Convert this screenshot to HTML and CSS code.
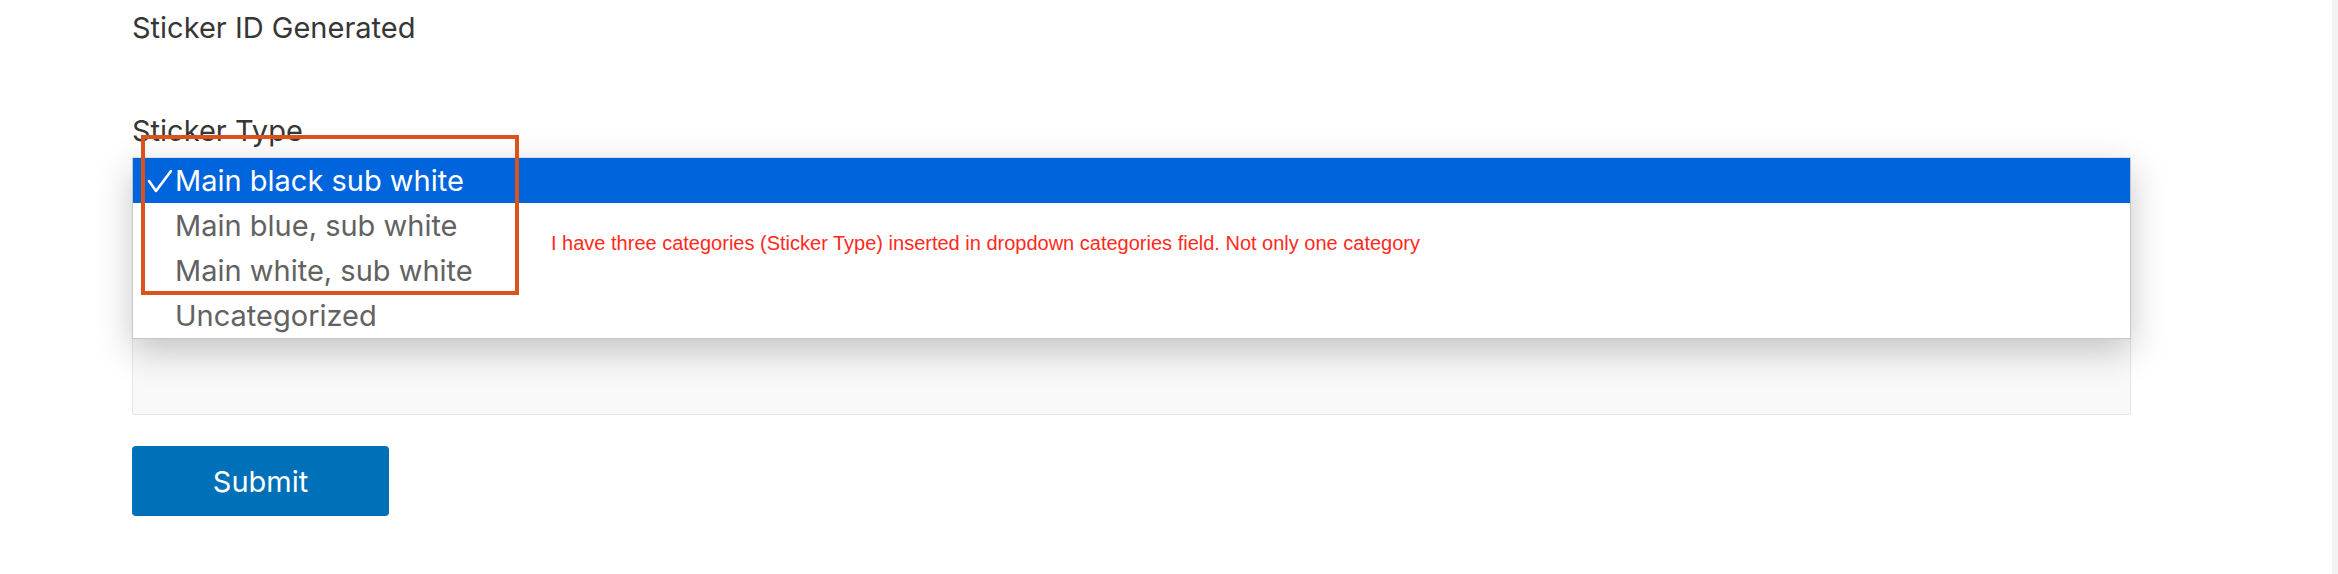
FILE: index.html
```html
<!DOCTYPE html>
<html lang="en">
<head>
    <meta charset="UTF-8">
    <title>Sticker form</title>
    <link rel="stylesheet" href="styles.css">
</head>
<body>
<div class="page">
    <form class="form">
        <!-- Generated id field -->
        <div class="field">
            <label class="label">Sticker ID Generated</label>
        </div>

        <!-- Sticker type select, shown opened -->
        <div class="field">
            <label class="label label-type">Sticker Type</label>
            <div class="select-wrap">
                <div class="select"></div>
                <div class="notes"></div>

                <ul class="menu">
                    <li class="option selected">
                        <svg class="check" width="26" height="24" viewBox="0 0 26 24">
                            <polyline points="2,12 9,22 24,2" fill="none" stroke="#ffffff" stroke-width="2.6" stroke-linecap="round" stroke-linejoin="round"/>
                        </svg>
                        Main black sub white
                    </li>
                    <li class="option">Main blue, sub white</li>
                    <li class="option">Main white, sub white</li>
                    <li class="option">Uncategorized</li>
                </ul>

                <!-- Annotation drawn over the screenshot -->
                <div class="mark"></div>
                <p class="note-text">I have three categories (Sticker Type) inserted in dropdown categories field. Not only one category</p>
            </div>
        </div>

        <button type="button" class="submit">Submit</button>
    </form>
    <div class="scroll-track"></div>
</div>
</body>
</html>
```

FILE: styles.css
```css
* {
    padding: 0;
    margin: 0;
    box-sizing: border-box;
}

body {
    background: #ffffff;
    font-family: "Inter", "Liberation Sans", sans-serif;
    color: #363636;
}

.page {
    display: flex;
    height: 574px;
}

.form {
    flex: 1;
    padding: 10px 0 0 132px;
}

.scroll-track {
    width: 6px;
    background-color: #f3f3f3;
}

.label {
    display: block;
    font-size: 29px;
    line-height: 36px;
    margin-bottom: 67px;
}

.label-type {
    margin-bottom: 8px;
}

.select-wrap {
    position: relative;
    width: 1999px;
}

.select {
    height: 86px;
    border: 1px solid #b9b9b9;
    border-radius: 3px;
    background-color: #ffffff;
}

.notes {
    height: 165px;
    margin-top: 7px;
    border: 1px solid #e6e6e6;
    border-radius: 3px;
    background-color: #f9f9f9;
}

.menu {
    position: absolute;
    top: 0;
    left: 0;
    width: 1999px;
    list-style: none;
    background-color: #ffffff;
    border: 1px solid #c6c6c6;
    border-top-color: #dcdcdc;
    box-shadow: 0 12px 34px rgba(0, 0, 0, 0.22);
}

.option {
    position: relative;
    height: 45px;
    line-height: 45px;
    padding-left: 42px;
    font-size: 29px;
    color: #626262;
}

.option.selected {
    background-color: #0064dc;
    color: #ffffff;
}

.check {
    position: absolute;
    left: 14px;
    top: 11px;
}

.mark {
    position: absolute;
    left: 9px;
    top: -22px;
    width: 378px;
    height: 160px;
    border: 4px solid #d9531a;
}

.note-text {
    position: absolute;
    left: 419px;
    top: 76px;
    font-family: "Liberation Sans", sans-serif;
    font-size: 20px;
    line-height: 20px;
    color: #ff2a1a;
    white-space: nowrap;
}

.submit {
    display: block;
    width: 257px;
    height: 70px;
    margin-top: 31px;
    border: none;
    border-radius: 4px;
    background-color: #0071b8;
    color: #ffffff;
    font-family: "Inter", "Liberation Sans", sans-serif;
    font-size: 29px;
    cursor: pointer;
}
```
